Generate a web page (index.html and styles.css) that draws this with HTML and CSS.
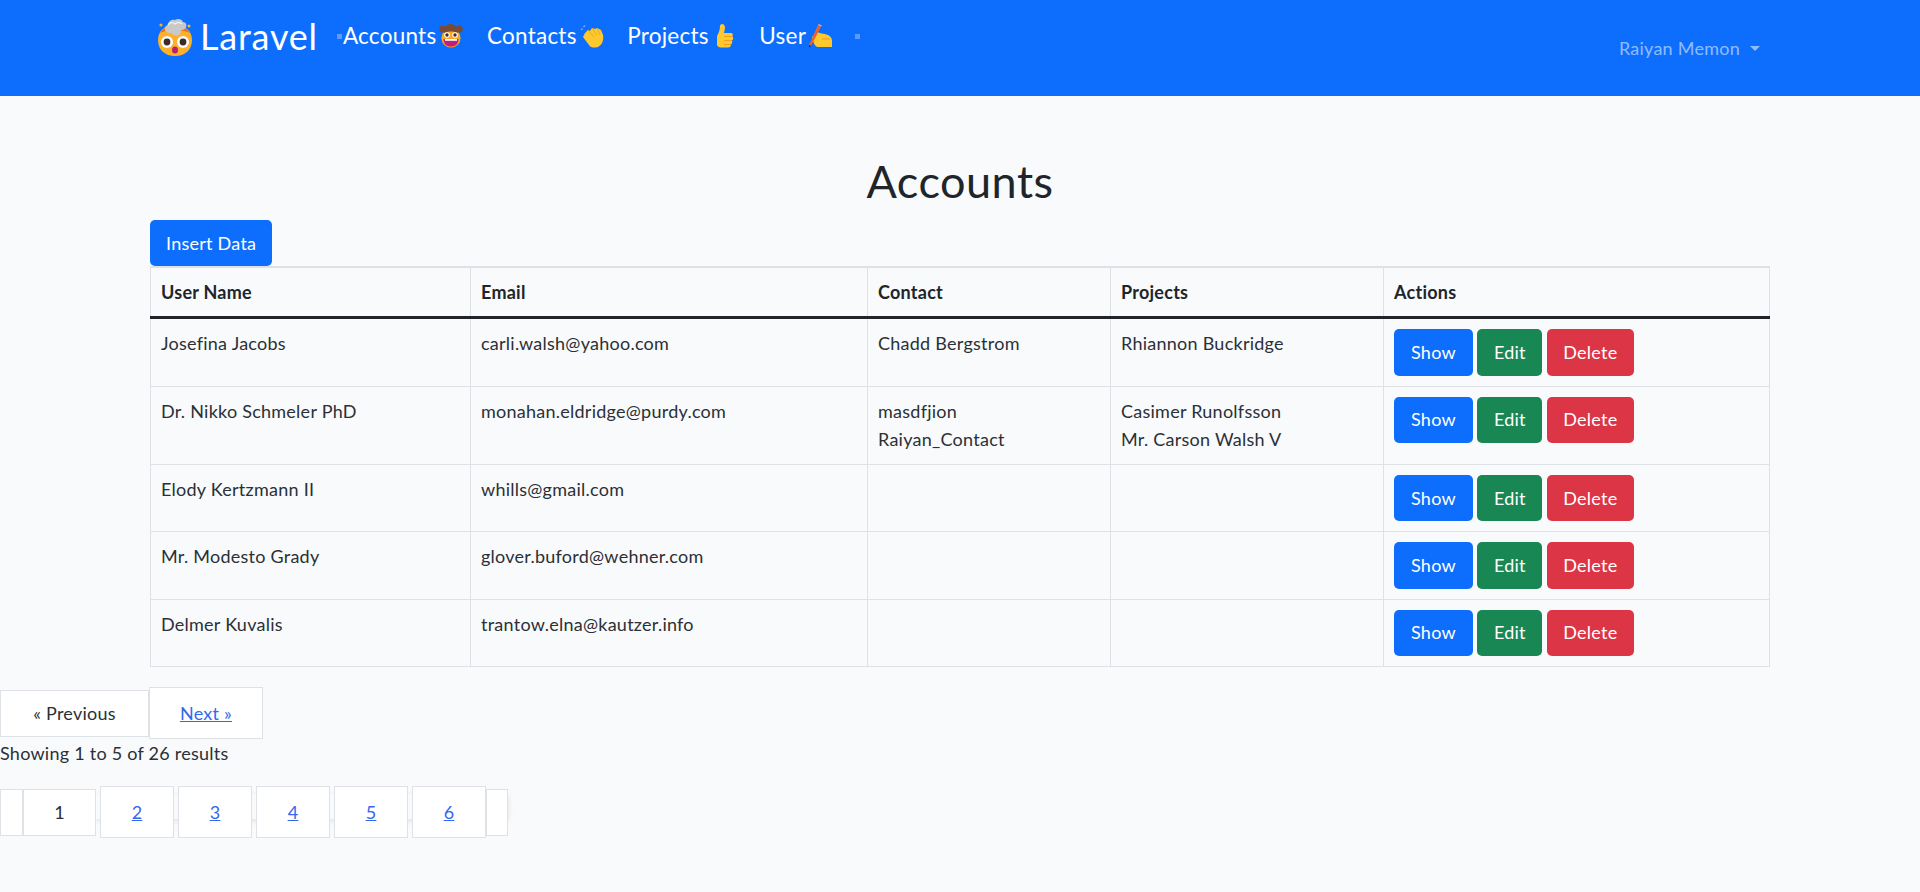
FILE: index.html
```html
<!DOCTYPE html>
<html lang="en">
<head>
  <meta charset="UTF-8">
  <meta name="viewport" content="width=device-width, initial-scale=1.0">
  <title>Accounts</title>
  <link rel="stylesheet" href="styles.css">
</head>
<body>

  <nav class="navbar">
    <a class="brand" href="#">
      <svg class="brand-icon" viewBox="0 0 38 40">
        <path d="M2 24C2 15 9 9 19 9s17 6 17 15c0 10-7 16-17 16S2 34 2 24z" fill="#fcb12b"/>
        <path d="M4 17c4-5 9-8 15-8s11 3 15 8c-4-2-9-3-15-3s-11 1-15 3z" fill="#f2661e"/>
        <path d="M15 17c-4 0-7-2-6-5 0-2 2-3 3-3 0-4 4-6 7-5 3-2 7-1 8 2 3 0 4 3 3 5-1 3-4 3-5 3 0 2-1 4-2 5-3 1-6 0-8-2z" fill="#c9c9c9"/>
        <path d="M12 9c2-3 5-3 7-1 2-2 5-2 7 0" fill="none" stroke="#efefef" stroke-width="1.4"/>
        <circle cx="11" cy="26" r="6" fill="#fff"/>
        <circle cx="27" cy="26" r="6" fill="#fff"/>
        <circle cx="11" cy="26" r="3.4" fill="#3d2b2b"/>
        <circle cx="27" cy="26" r="3.4" fill="#3d2b2b"/>
        <ellipse cx="19" cy="34" rx="3" ry="3.6" fill="#bd1f6f"/>
        <circle cx="5" cy="9" r="1.6" fill="#fcb12b"/>
        <circle cx="33" cy="10" r="1.5" fill="#fcb12b"/>
      </svg>
      <span>Laravel</span>
    </a>
    <span class="dot dot-first"></span>
    <ul class="nav-links">
      <li><a href="#">Accounts<svg class="emoji" viewBox="0 0 24 24">
        <circle cx="12" cy="14" r="9.6" fill="#f9a825"/>
        <circle cx="3.8" cy="5" r="3.6" fill="#7b4a32"/>
        <circle cx="20.2" cy="5" r="3.6" fill="#7b4a32"/>
        <path d="M5 9c0-6 3-9 7-9s7 3 7 9c-4-2-10-2-14 0z" fill="#7b4a32"/>
        <circle cx="8" cy="11" r="2.8" fill="#fff"/>
        <circle cx="16" cy="11" r="2.8" fill="#fff"/>
        <circle cx="8" cy="11" r="1.7" fill="#3d2b2b"/>
        <circle cx="16" cy="11" r="1.7" fill="#3d2b2b"/>
        <path d="M4.5 15h15c0 5-3 7.5-7.5 7.5S4.500 20 4.500 15z" fill="#c21f7b"/>
        <path d="M6 15h12v1.800H6z" fill="#fff"/>
      </svg></a></li>
      <li><a href="#">Contacts<svg class="emoji" viewBox="0 0 24 24">
        <path d="M5 9l3-3 2 1 2-3 3 1 2-1 4 2 2 5c1 5-1 10-5 12-4 1-7 1-9-2L3 13z" fill="#fdc92f"/>
        <path d="M8 6l6 7M12 4l5 7M17 4l3 7" stroke="#f0a91e" stroke-width="1" fill="none"/>
        <path d="M1 6l1.500-1.500M3.500 3L5 1.500" stroke="#6eb0ff" stroke-width="1.400" fill="none"/>
      </svg></a></li>
      <li><a href="#">Projects<svg class="emoji" viewBox="0 0 24 24">
        <path d="M10 0c2 0 3 2 3 4l-1 5h7c2 0 2 2 1.500 3.500 1 1.500 1 3-.5 4 .5 2 0 3-1 4 0 2-1 3-3 3H9c-2 0-4-1-4-3V12c2-3 3-7 3-10 0-1 1-2 2-2z" fill="#fdc92f"/>
        <path d="M12 12.500h8M12 16.500h8M12 20.500h7" stroke="#f0a01e" stroke-width="1.200" fill="none"/>
      </svg></a></li>
      <li><a href="#">User<svg class="emoji" viewBox="0 0 24 24">
        <path d="M3 13l5-5c3 1 6 2 8 2 4 1 7 3 7 7v6H9c-3 0-5-5-6-10z" fill="#fdc92f"/>
        <path d="M13 15h8" stroke="#f0a01e" stroke-width="1.200" fill="none"/>
        <path d="M0 21L9 1l3 1.500L2 22z" fill="#e8632b"/>
        <path d="M9 1l.5-1L13 1.500 12 2.500z" fill="#f7a38a"/>
        <path d="M0 21l-.5 3 2.500-2z" fill="#222"/>
      </svg></a></li>
    </ul>
    <span class="dot"></span>
    <a class="user-menu" href="#">Raiyan Memon<span class="caret"></span></a>
  </nav>

  <main class="container">
    <h1 class="page-title">Accounts</h1>
    <a class="btn btn-blue btn-insert" href="#">Insert Data</a>

    <table class="data-table">
      <colgroup>
        <col class="col-name">
        <col class="col-email">
        <col class="col-contact">
        <col class="col-projects">
        <col class="col-actions">
      </colgroup>
      <thead>
        <tr>
          <th>User Name</th>
          <th>Email</th>
          <th>Contact</th>
          <th>Projects</th>
          <th>Actions</th>
        </tr>
      </thead>
      <tbody>
        <tr>
          <td>Josefina Jacobs</td>
          <td>carli.walsh@yahoo.com</td>
          <td>Chadd Bergstrom</td>
          <td>Rhiannon Buckridge</td>
          <td class="actions"><a class="btn btn-blue" href="#">Show</a><a class="btn btn-green" href="#">Edit</a><a class="btn btn-red" href="#">Delete</a></td>
        </tr>
        <tr>
          <td>Dr. Nikko Schmeler PhD</td>
          <td>monahan.eldridge@purdy.com</td>
          <td>masdfjion<br>Raiyan_Contact</td>
          <td>Casimer Runolfsson<br>Mr. Carson Walsh V</td>
          <td class="actions"><a class="btn btn-blue" href="#">Show</a><a class="btn btn-green" href="#">Edit</a><a class="btn btn-red" href="#">Delete</a></td>
        </tr>
        <tr>
          <td>Elody Kertzmann II</td>
          <td>whills@gmail.com</td>
          <td></td>
          <td></td>
          <td class="actions"><a class="btn btn-blue" href="#">Show</a><a class="btn btn-green" href="#">Edit</a><a class="btn btn-red" href="#">Delete</a></td>
        </tr>
        <tr>
          <td>Mr. Modesto Grady</td>
          <td>glover.buford@wehner.com</td>
          <td></td>
          <td></td>
          <td class="actions"><a class="btn btn-blue" href="#">Show</a><a class="btn btn-green" href="#">Edit</a><a class="btn btn-red" href="#">Delete</a></td>
        </tr>
        <tr>
          <td>Delmer Kuvalis</td>
          <td>trantow.elna@kautzer.info</td>
          <td></td>
          <td></td>
          <td class="actions"><a class="btn btn-blue" href="#">Show</a><a class="btn btn-green" href="#">Edit</a><a class="btn btn-red" href="#">Delete</a></td>
        </tr>
      </tbody>
    </table>
  </main>

  <div class="simple-pager">
    <span class="pager-current">« Previous</span>
    <a class="pager-link" href="#">Next »</a>
  </div>
  <p class="results">Showing 1 to 5 of 26 results</p>

  <div class="pages">
    <span class="page-end"></span>
    <span class="page-current">1</span>
    <a class="page-link" href="#">2</a>
    <a class="page-link" href="#">3</a>
    <a class="page-link" href="#">4</a>
    <a class="page-link" href="#">5</a>
    <a class="page-link" href="#">6</a>
    <span class="page-end page-end-last"></span>
  </div>

</body>
</html>
```

FILE: styles.css
```css
* {
  box-sizing: border-box;
}
body {
  font-family: 'Lato', 'Noto Sans', sans-serif;
  font-size: 18px;
  line-height: 1.6;
  letter-spacing: 0.25px;
  color: #2b3036;
  background: #f8fafc;
  margin: 0;
  padding: 0;
}
a {
  text-decoration: none;
}

/* Top bar */
.navbar {
  height: 96px;
  background-color: #0d6efd;
  display: flex;
  align-items: flex-start;
  padding: 14px 150px 0 156px;
}
.brand {
  display: flex;
  align-items: center;
  color: #fff;
  font-size: 36px;
  line-height: 44px;
  letter-spacing: 0.8px;
}
.brand-icon {
  width: 38px;
  height: 40px;
  margin-right: 6px;
}
.dot {
  width: 5px;
  height: 5px;
  margin-top: 20px;
  background-color: #5b9bff;
}
.dot-first {
  margin-left: 19px;
}
.nav-links {
  list-style: none;
  display: flex;
  gap: 23.5px;
  margin: 0 22px 0 1px;
  padding: 0;
}
.nav-links a {
  display: flex;
  align-items: center;
  gap: 3px;
  color: #fff;
  font-size: 22.5px;
  line-height: 36px;
  margin-top: 4px;
}
.emoji {
  width: 24px;
  height: 24px;
}
.user-menu {
  margin-left: auto;
  margin-top: 20px;
  margin-right: 10px;
  color: rgba(255, 255, 255, 0.55);
  display: flex;
  align-items: center;
}
.caret {
  width: 0;
  height: 0;
  margin-left: 10px;
  border-top: 5.4px solid rgba(255, 255, 255, 0.55);
  border-left: 5.4px solid transparent;
  border-right: 5.4px solid transparent;
}

/* Main area */
.container {
  padding: 0 150px;
}
.page-title {
  font-size: 45px;
  font-weight: 400;
  line-height: 1.2;
  letter-spacing: 0.5px;
  text-align: center;
  color: #212529;
  margin: 0;
  padding: 58px 0 12px;
}
.btn {
  display: inline-block;
  color: #fff;
  padding: 7.7px 15.5px;
  border: 1px solid transparent;
  border-radius: 5px;
}
.btn-insert {
  padding: 7.7px 15px;
}
.btn-blue {
  background-color: #0d6efd;
}
.btn-green {
  background-color: #198754;
}
.btn-red {
  background-color: #dc3545;
}

/* Table */
.data-table {
  width: 1620px;
  table-layout: fixed;
  border-collapse: collapse;
}
.col-name {
  width: 320px;
}
.col-email {
  width: 397px;
}
.col-contact {
  width: 243px;
}
.col-projects {
  width: 273px;
}
.data-table th, .data-table td {
  border: 1px solid #dee2e6;
  padding: 10px;
  text-align: left;
  vertical-align: top;
}
.data-table th {
  font-weight: 700;
  color: #212529;
  padding: 9.5px 10px 10px;
  border-top: 2px solid #dee2e6;
  border-bottom: 3px solid #212529;
}
.actions .btn {
  margin-right: 4.5px;
}
.actions .btn-blue {
  padding: 7.7px 16px;
}

/* Pagination */
.simple-pager {
  display: flex;
  align-items: center;
  margin-top: 20.5px;
}
.pager-current, .pager-link {
  display: block;
  text-align: center;
  background: #fff;
  border: 1px solid #dee2e6;
}
.pager-current {
  width: 149px;
  padding: 8px 0;
}
.pager-link {
  width: 114px;
  padding: 10.6px 0;
  color: #3368ee;
  text-decoration: underline;
}
.results {
  margin: 0;
  line-height: 29px;
}
.pages {
  position: relative;
  width: 508px;
  display: flex;
  align-items: center;
  margin-top: 18px;
}
/* faint shadow that shows in the gaps between the page links */
.pages::before {
  content: "";
  position: absolute;
  left: 96px;
  right: 0;
  top: 8px;
  height: 25px;
  box-shadow: 0 2px 6px rgba(0, 0, 0, 0.1);
  z-index: -1;
}
.page-end, .page-current, .page-link {
  display: block;
  text-align: center;
  background: #fff;
  border: 1px solid #dee2e6;
}
.page-end {
  width: 23px;
  height: 47px;
}
.page-end-last {
  width: 22px;
}
.page-current {
  width: 73px;
  height: 47px;
  line-height: 45px;
  margin-right: 4px;
}
.page-link {
  width: 74px;
  height: 52px;
  line-height: 50px;
  margin-right: 4px;
  color: #3368ee;
  text-decoration: underline;
}
.page-link:nth-child(7) {
  margin-right: 0;
}
```
